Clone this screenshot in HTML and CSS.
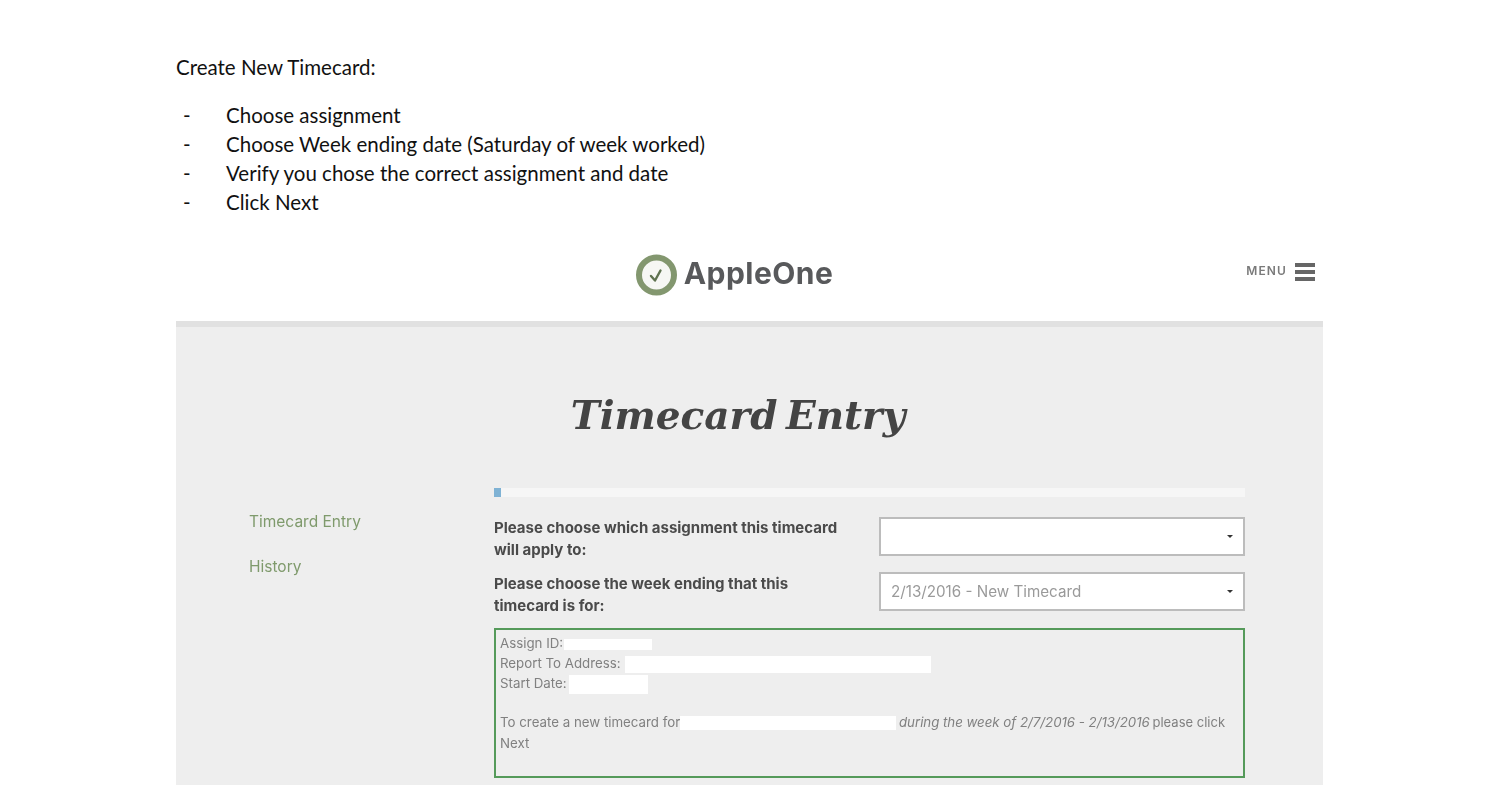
FILE: index.html
```html
<!DOCTYPE html>
<html lang="en">
<head>
<meta charset="utf-8">
<title>Create New Timecard</title>
<link rel="stylesheet" href="styles.css">
</head>
<body>
<main class="page">
  <p class="intro">Create New Timecard:</p>
  <ul class="steps">
    <li><span class="dash">-</span><span>Choose assignment</span></li>
    <li><span class="dash">-</span><span>Choose Week ending date (Saturday of week worked)</span></li>
    <li><span class="dash">-</span><span>Verify you chose the correct assignment and date</span></li>
    <li><span class="dash">-</span><span>Click Next</span></li>
  </ul>
  <section class="shot">
    <header class="top">
      <div class="logo">
        <svg class="mark" viewBox="0 0 44 44" width="44" height="44" aria-hidden="true">
          <circle cx="21.5" cy="22" r="17.5" fill="#f6f7f4" stroke="#83976f" stroke-width="6"/>
          <path d="M16 23 L20 27.5 L25.5 17.5" fill="none" stroke="#5f7350" stroke-width="2.4" stroke-linecap="round" stroke-linejoin="round"/>
        </svg>
        <span class="brand">AppleOne</span>
      </div>
      <div class="menu">
        <span class="menu-label">MENU</span>
        <span class="burger"><i></i><i></i><i></i></span>
      </div>
    </header>
    <div class="panel">
      <h1 class="title">Timecard Entry</h1>
      <div class="columns">
        <nav class="side">
          <a>Timecard Entry</a>
          <a>History</a>
        </nav>
        <div class="form">
          <div class="progress"><div class="progress-fill"></div></div>
          <div class="row">
            <label>Please choose which assignment this timecard will apply to:</label>
            <div class="select"><span></span><b class="caret"></b></div>
          </div>
          <div class="row">
            <label>Please choose the week ending that this timecard is for:</label>
            <div class="select"><span>2/13/2016 - New Timecard</span><b class="caret"></b></div>
          </div>
          <div class="info">
            <div class="line l1">Assign ID:<span class="mask m1"></span></div>
            <div class="line l2">Report To Address:<span class="mask m2"></span></div>
            <div class="line l3">Start Date:<span class="mask m3"></span></div>
            <div class="line l4">To create a new timecard for<span class="mask m4"></span> <em>during the week of 2/7/2016 - 2/13/2016</em> <span class="tail">please click</span></div>
            <div class="line l5">Next</div>
          </div>
        </div>
      </div>
    </div>
  </section>
</main>
</body>
</html>
```
FILE: styles.css
```css
html, body { margin: 0; padding: 0; background: #fff; height: 785px; overflow: hidden; }
.page { padding: 53px 177px 0 176px; font-family: Lato, "Noto Sans", sans-serif; color: #111; }
.intro { margin: 0 0 19px; font-size: 20.5px; line-height: 29px; }
.steps { list-style: none; margin: 0 0 27px; padding: 0; font-size: 20.5px; line-height: 29px; }
.steps li { display: flex; }
.dash { width: 50px; padding-left: 7px; box-sizing: border-box; }

.shot { filter: blur(0.35px); font-family: Inter, "Open Sans", sans-serif; }
.top { height: 77px; position: relative; display: flex; justify-content: center; background: #fff; }
.logo { display: flex; align-items: center; gap: 5px; height: 61px; margin-right: 30px; }
.mark { display: block; margin-left: -1px; }
.brand { font-size: 30px; font-weight: 700; color: #58595b; letter-spacing: 0.45px; line-height: 58px; margin-top: -3px; }
.menu { position: absolute; right: 8px; top: 19px; display: flex; align-items: center; gap: 8px; }
.menu-label { font-size: 12px; font-weight: 600; letter-spacing: 1.1px; color: #7a7a7a; margin-top: -4px; }
.burger { display: flex; flex-direction: column; gap: 3px; width: 20px; }
.burger i { display: block; height: 4px; background: #666; }

.panel { background: #eee; border-top: 6px solid #e1e1e1; padding: 63px 78px 0 73px; height: 470px; box-sizing: border-box; }
.title { margin: 0 0 48px; padding-right: 18px; text-align: center; font-family: "DejaVu Serif", serif; font-size: 39px; line-height: 50px; font-weight: 700; font-style: italic; color: #444; letter-spacing: 0; word-spacing: -5px; }
.columns { display: flex; }
.side { width: 245px; flex: none; display: flex; flex-direction: column; gap: 27px; padding-top: 25px; font-size: 15.5px; line-height: 18px; color: #7f9a6c; }
.form { width: 751px; flex: none; }
.progress { height: 9px; background: #f6f6f6; margin-bottom: 20px; }
.progress-fill { width: 7px; height: 9px; background: #7fb2d4; }
.row { display: flex; justify-content: space-between; margin-bottom: 16px; height: 39px; }
.row label { width: 350px; font-size: 15px; line-height: 22px; font-weight: 700; color: #4a4a4a; }
.row + .row label { margin-top: 1px; }
.select { width: 366px; height: 39px; box-sizing: border-box; border: 2px solid #bcbcbc; background: #fff; display: flex; align-items: center; justify-content: space-between; padding: 0 10px 0 10px; font-size: 15.2px; color: #9a9a9a; }
.caret { width: 0; height: 0; border-left: 3px solid transparent; border-right: 3px solid transparent; border-top: 3px solid #333; }
.info { height: 150px; box-sizing: border-box; border: 2px solid #559a5a; padding: 3px 4px; font-size: 13.3px; line-height: 20px; color: #808080; margin-top: 17px; }
.line { white-space: nowrap; }
.l4 { margin-top: 18px; }
.l5 { margin-top: 1px; }
.l4 em { letter-spacing: -0.03px; margin-left: -1px; }
.tail { font-size: 13px; margin-left: -1px; }
.mask { display: inline-block; background: #fff; vertical-align: middle; }
.m1 { width: 88px; height: 11px; margin-left: 1px; }
.m2 { width: 306px; height: 17px; margin-left: 4px; }
.m3 { width: 79px; height: 19px; margin-left: 2px; }
.m4 { width: 216px; height: 14px; }
```
